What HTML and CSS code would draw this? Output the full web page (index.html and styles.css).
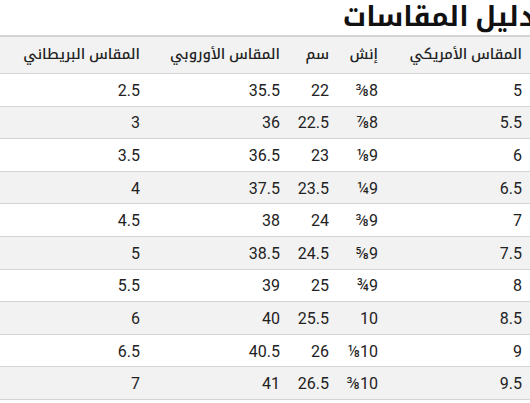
FILE: index.html
```html
<!DOCTYPE html>
<html lang="ar" dir="rtl">
<head>
<meta charset="utf-8">
<link rel="stylesheet" href="styles.css">
</head>
<body>
<h1 class="title">دليل المقاسات</h1>
<table class="sizes">
<colgroup>
<col class="c1"><col class="c2"><col class="c3"><col class="c4"><col class="c5">
</colgroup>
<thead>
<tr><th>المقاس الأمريكي</th><th>إنش</th><th>سم</th><th>المقاس الأوروبي</th><th>المقاس البريطاني</th></tr>
</thead>
<tbody>
<tr><td>5</td><td>8⅜</td><td>22</td><td>35.5</td><td>2.5</td></tr>
<tr><td>5.5</td><td>8⅞</td><td>22.5</td><td>36</td><td>3</td></tr>
<tr><td>6</td><td>9⅛</td><td>23</td><td>36.5</td><td>3.5</td></tr>
<tr><td>6.5</td><td>9¼</td><td>23.5</td><td>37.5</td><td>4</td></tr>
<tr><td>7</td><td>9⅜</td><td>24</td><td>38</td><td>4.5</td></tr>
<tr><td>7.5</td><td>9⅝</td><td>24.5</td><td>38.5</td><td>5</td></tr>
<tr><td>8</td><td>9¾</td><td>25</td><td>39</td><td>5.5</td></tr>
<tr><td>8.5</td><td>10</td><td>25.5</td><td>40</td><td>6</td></tr>
<tr><td>9</td><td>10⅛</td><td>26</td><td>40.5</td><td>6.5</td></tr>
<tr><td>9.5</td><td>10⅜</td><td>26.5</td><td>41</td><td>7</td></tr>
</tbody>
</table>
</body>
</html>
```

FILE: styles.css
```css
html, body {
  margin: 0;
  padding: 0;
  background: #ffffff;
}
body {
  font-family: Roboto, "Noto Kufi Arabic", "Noto Sans Arabic", sans-serif;
  color: #222222;
}
.title {
  margin: 0 -5px 0 0;
  padding: 0;
  font-size: 27px;
  line-height: 35px;
  height: 35px;
  font-weight: 700;
  color: #111111;
}
.sizes {
  width: 530px;
  border-collapse: collapse;
  table-layout: fixed;
  font-size: 16px;
}
.c1 { width: 144px; }
.c2 { width: 49px; }
.c3 { width: 49px; }
.c4 { width: 140px; }
.c5 { width: 148px; }
.sizes th, .sizes td {
  text-align: right;
  padding: 0 8px 0 0;
  border-bottom: 1px solid #d4d4d4;
  white-space: nowrap;
  line-height: 20px;
}
.sizes th {
  height: 36px;
  font-size: 14.5px;
  font-weight: 500;
  background: #f2f2f2;
  border-top: 2px solid #d4d4d4;
}
.sizes td {
  height: 29.6px;
  padding-top: 2px;
}
.sizes tbody tr:nth-child(even) td {
  background: #f2f2f2;
}
```
